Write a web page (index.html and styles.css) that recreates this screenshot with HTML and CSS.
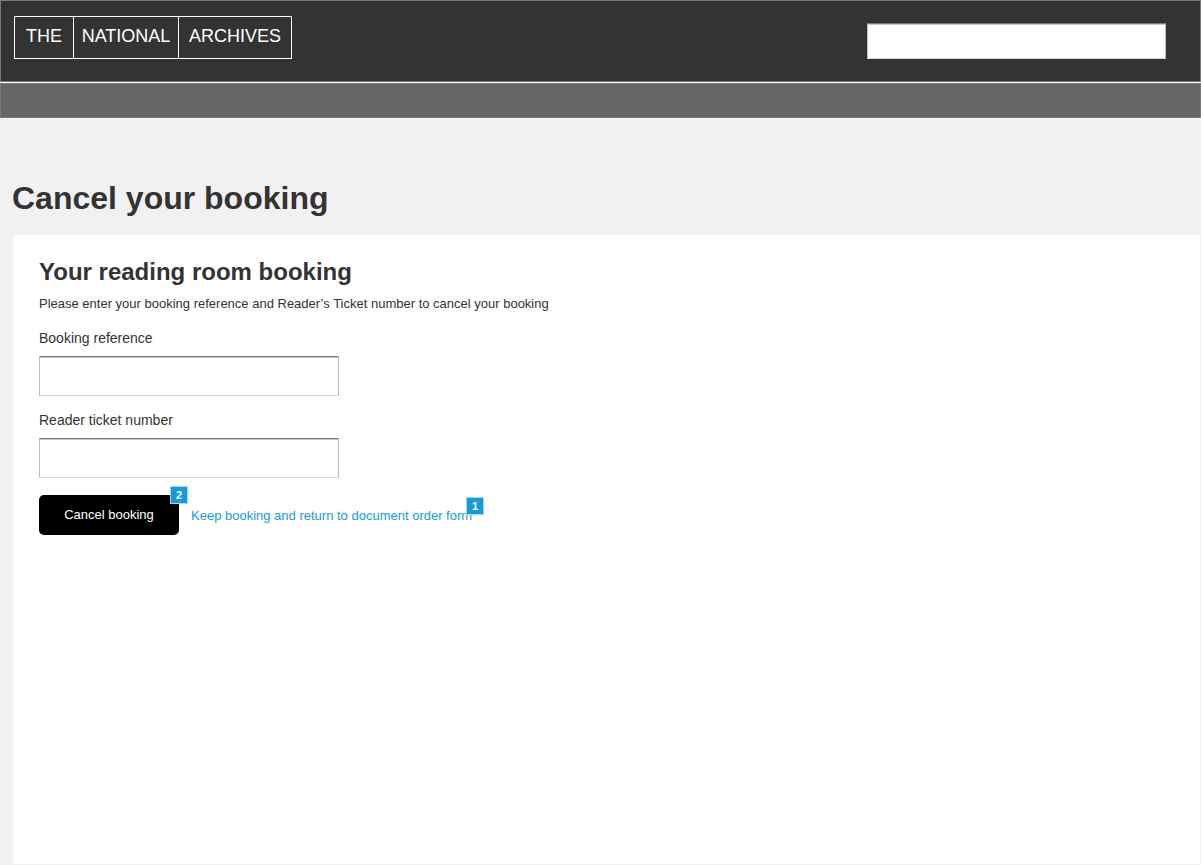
FILE: index.html
```html
<!DOCTYPE html>
<html lang="en">
<head>
<meta charset="utf-8">
<meta name="viewport" content="width=device-width, initial-scale=1">
<title>Cancel your booking</title>
<link rel="stylesheet" href="styles.css">
</head>
<body>
<header class="site-header">
  <div class="logo">
    <span class="logo-word">THE</span>
    <span class="logo-word">NATIONAL</span>
    <span class="logo-word">ARCHIVES</span>
  </div>
  <input class="field search" type="search" aria-label="Search">
</header>
<nav class="site-nav" aria-label="Main"></nav>
<main class="page">
  <h1 class="page-title">Cancel your booking</h1>
  <section class="panel">
    <h2 class="panel-title">Your reading room booking</h2>
    <p class="intro">Please enter your booking reference and Reader’s Ticket number to cancel your booking</p>
    <form class="form">
      <div class="form-row">
        <label class="label" for="reference">Booking reference</label>
        <input class="field" id="reference" type="text">
      </div>
      <div class="form-row">
        <label class="label" for="ticket">Reader ticket number</label>
        <input class="field" id="ticket" type="text">
      </div>
      <div class="actions">
        <div class="noted">
          <button class="button" type="button">Cancel booking</button>
          <span class="note">2</span>
        </div>
        <div class="noted">
          <a class="link" href="#">Keep booking and return to document order form</a>
          <span class="note note-link">1</span>
        </div>
      </div>
    </form>
  </section>
</main>
</body>
</html>
```
FILE: styles.css
```css
* {
  box-sizing: border-box;
}

body {
  margin: 0;
  min-height: 100vh;
  display: flex;
  flex-direction: column;
  background: #f1f1f1;
  color: #333;
  font-family: "Liberation Sans", Arial, sans-serif;
  font-size: 13px;
}

.site-header {
  display: flex;
  justify-content: space-between;
  align-items: flex-start;
  padding: 15px 34px 22px 13px;
  border: 1px solid #797979;
  background: #333;
}

.logo {
  display: grid;
  grid-template-columns: 59px 105px 113px;
  border: 1px solid #fff;
  border-right: 0;
  color: #fff;
  font-size: 18px;
  line-height: 20px;
  text-align: center;
}

.logo-word {
  padding: 9px 0 12px;
  border-right: 1px solid #fff;
}

.field {
  display: block;
  width: 300px;
  height: 40px;
  padding: 0 8px;
  border: 1px solid #bbb;
  border-top-color: #777;
  border-bottom-color: #d5d5d5;
  border-radius: 0;
  background: #fff;
  box-shadow: inset 0 1px #c8c8c8;
  font: inherit;
  appearance: none;
}

.search {
  width: 299px;
  height: 36px;
  margin-top: 7px;
}

.site-nav {
  height: 35px;
  margin-top: 1px;
  border: 1px solid #797979;
  background: #666;
  box-shadow: 0 -1px #fff;
}

.page {
  flex: 1;
  display: flex;
  flex-direction: column;
  padding: 60px 0 0 12px;
}

.page-title {
  margin: 0;
  font-size: 32px;
  line-height: 40px;
}

.panel {
  flex: 1;
  margin: 17px 0 0 1px;
  padding: 22px 26px;
  border-right: 1px solid #f1f1f1;
  border-bottom: 1px solid #f1f1f1;
  background: #fff;
}

.panel-title {
  margin: 0;
  font-size: 24px;
  line-height: 30px;
}

.intro {
  margin: 8px 0 0;
  line-height: 18px;
}

.form {
  display: flex;
  flex-direction: column;
  gap: 15px;
  margin-top: 16px;
}

.label {
  display: block;
  margin-bottom: 9px;
  font-size: 14px;
  line-height: 18px;
}

.actions {
  display: flex;
  align-items: center;
  gap: 12px;
  margin-top: 2px;
}

.noted {
  position: relative;
}

.button {
  display: block;
  width: 140px;
  height: 40px;
  padding: 0 0 2px;
  border: 0;
  border-radius: 5px;
  background: #000;
  color: #fff;
  font: inherit;
}

.link {
  color: #169bd5;
  text-decoration: none;
}

.note {
  position: absolute;
  top: -9px;
  right: -9px;
  width: 18px;
  height: 18px;
  border: 1px solid #a2d7ee;
  background: #169bd5;
  color: #fff;
  font-size: 11px;
  font-weight: bold;
  line-height: 16px;
  text-align: center;
}

.note-link {
  top: -11px;
  right: -12px;
}
```
